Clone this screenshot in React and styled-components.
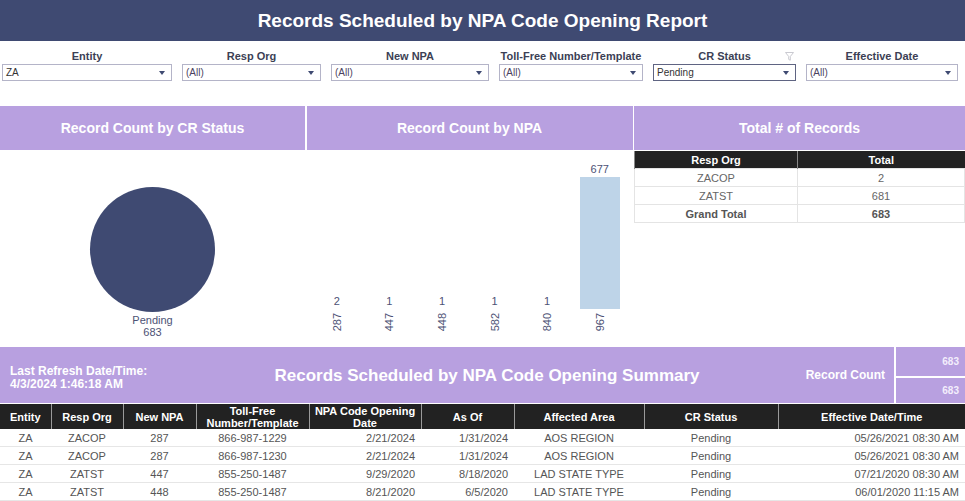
import styled, { createGlobalStyle } from "styled-components";

const GlobalStyle = createGlobalStyle`
    body {
        margin: 0;
        font-family: "Liberation Sans", Arial, sans-serif;
        background: #ffffff;
    }
`;

const filters = [
    { label: "Entity", value: "ZA" },
    { label: "Resp Org", value: "(All)" },
    { label: "New NPA", value: "(All)" },
    { label: "Toll-Free Number/Template", value: "(All)" },
    { label: "CR Status", value: "Pending", active: true },
    { label: "Effective Date", value: "(All)" },
];

const npaBars = [
    { npa: "287", count: 2 },
    { npa: "447", count: 1 },
    { npa: "448", count: 1 },
    { npa: "582", count: 1 },
    { npa: "840", count: 1 },
    { npa: "967", count: 677 },
];

const rows = [
    ["ZA", "ZACOP", "287", "866-987-1229", "2/21/2024", "1/31/2024", "AOS REGION", "Pending", "05/26/2021 08:30 AM"],
    ["ZA", "ZACOP", "287", "866-987-1230", "2/21/2024", "1/31/2024", "AOS REGION", "Pending", "05/26/2021 08:30 AM"],
    ["ZA", "ZATST", "447", "855-250-1487", "9/29/2020", "8/18/2020", "LAD STATE TYPE", "Pending", "07/21/2020 08:30 AM"],
    ["ZA", "ZATST", "448", "855-250-1487", "8/21/2020", "6/5/2020", "LAD STATE TYPE", "Pending", "06/01/2020 11:15 AM"],
];

const columns = [
    { title: "Entity", width: 51, align: "center" },
    { title: "Resp Org", width: 72, align: "center" },
    { title: "New NPA", width: 73, align: "center" },
    { title: "Toll-Free Number/Template", width: 113, align: "center" },
    { title: "NPA Code Opening Date", width: 112, align: "right" },
    { title: "As Of", width: 93, align: "right" },
    { title: "Affected Area", width: 130, align: "center" },
    { title: "CR Status", width: 134, align: "center" },
    { title: "Effective Date/Time", width: 187, align: "right" },
];

const Page = styled.div`
    width: 965px;
    height: 501px;
    overflow: hidden;
`;

const TitleBar = styled.header`
    height: 41px;
    background: #3f4a72;
    color: #ffffff;
    display: flex;
    align-items: center;
    justify-content: center;
    font-size: 19px;
    font-weight: bold;
`;

const FilterRow = styled.div`
    display: grid;
    grid-template-columns: 170px 139px 158px 144px 143px 152px;
    column-gap: 10px;
    padding: 8px 0 0 2px;
    height: 57px;
`;

const Filter = styled.div`
    display: flex;
    flex-direction: column;
    position: relative;
`;

const FilterLabel = styled.div`
    text-align: center;
    font-size: 11px;
    font-weight: bold;
    color: #3c3f55;
    height: 15px;
    line-height: 15px;
`;

const FunnelIcon = styled.svg`
    position: absolute;
    right: 2px;
    top: 3px;
`;

const Select = styled.div`
    height: 17px;
    box-sizing: border-box;
    border: 1px solid ${(p) => (p.$active ? "#5f6482" : "#b4b4c8")};
    display: flex;
    align-items: center;
    justify-content: space-between;
    padding: 0 6px 0 3px;
    font-size: 10px;
    color: ${(p) => (p.$value === "(All)" ? "#4b4260" : "#333333")};
`;

const Caret = styled.span`
    width: 0;
    height: 0;
    border-left: 3px solid transparent;
    border-right: 3px solid transparent;
    border-top: 4px solid #3f4a72;
`;

const Panels = styled.div`
    display: grid;
    grid-template-columns: 305px 326px 331px;
    column-gap: 1.5px;
    height: 241px;
`;

const Panel = styled.section`
    display: flex;
    flex-direction: column;
`;

const PanelHeader = styled.div`
    height: 44px;
    background: #b8a0e0;
    color: #ffffff;
    display: flex;
    align-items: center;
    justify-content: center;
    font-size: 14px;
    font-weight: bold;
`;

const PieBody = styled.div`
    display: flex;
    flex-direction: column;
    align-items: center;
    padding-top: 37px;
`;

const Pie = styled.div`
    width: 125px;
    height: 125px;
    border-radius: 50%;
    background: #3f4a72;
`;

const PieLabel = styled.div`
    margin-top: 2px;
    font-size: 11px;
    line-height: 12px;
    color: #4d5275;
    text-align: center;
`;

const BarChart = styled.div`
    display: flex;
    padding: 0 0 0 4px;
    height: 197px;
    align-items: stretch;
`;

const BarColumn = styled.div`
    width: 52.6px;
    display: flex;
    flex-direction: column;
    align-items: center;
`;

const BarArea = styled.div`
    height: 159px;
    display: flex;
    flex-direction: column;
    justify-content: flex-end;
    align-items: center;
`;

const BarValue = styled.div`
    font-size: 11px;
    color: #4d5275;
    margin-bottom: 2px;
`;

const Bar = styled.div`
    width: 40px;
    background: #bed4e8;
`;

const AxisLabel = styled.div`
    margin-top: 4px;
    writing-mode: vertical-rl;
    transform: rotate(180deg);
    font-size: 11px;
    color: #4d5275;
`;

const SummaryTable = styled.table`
    border-collapse: collapse;
    width: 331px;
    margin-top: 1px;
    font-size: 11px;

    th {
        background: #222222;
        color: #ffffff;
        font-weight: bold;
        height: 17px;
        padding: 0;
        border-left: 1px solid #888888;
    }

    td {
        height: 17px;
        padding: 0;
        text-align: center;
        color: #666666;
        border: 1px solid #e4e4e4;
    }

    tr.total td {
        font-weight: bold;
        color: #555555;
    }
`;

const SummaryBand = styled.div`
    display: grid;
    grid-template-columns: 260px 454px 180px 71px;
    height: 56px;
    background: #b8a0e0;
    color: #ffffff;
    border-bottom: 1px solid #ffffff;
`;

const RefreshInfo = styled.div`
    font-size: 12px;
    font-weight: bold;
    line-height: 13px;
    padding: 18px 0 0 10px;
`;

const SummaryTitle = styled.div`
    display: flex;
    align-items: center;
    justify-content: center;
    font-size: 17px;
    font-weight: bold;
    padding-top: 1px;
`;

const CountLabel = styled.div`
    display: flex;
    align-items: center;
    justify-content: flex-end;
    padding-right: 9px;
    font-size: 12px;
    font-weight: bold;
`;

const CountCells = styled.div`
    display: grid;
    grid-template-rows: 29px 1fr;
    row-gap: 2px;
    border-left: 2px solid #ffffff;
    background: #ffffff;
`;

const CountCell = styled.div`
    display: flex;
    align-items: center;
    justify-content: flex-end;
    padding-right: 6px;
    font-size: 10px;
    font-weight: bold;
    color: #f3eefc;
    background: #b8a0e0;
`;

const DataTable = styled.table`
    border-collapse: collapse;
    table-layout: fixed;
    width: 965px;
    font-size: 11px;

    th {
        background: #222222;
        color: #ffffff;
        font-weight: bold;
        height: 25px;
        padding: 0 2px;
        line-height: 12px;
        text-align: center;
        border-left: 1px solid #9a9a9a;
    }

    th:first-child {
        border-left: none;
    }

    td {
        height: 17px;
        padding: 0 6px;
        color: #555555;
        border-bottom: 1px solid #e6e6e6;
        white-space: nowrap;
    }
`;

const Cell = styled.td`
    text-align: ${(p) => p.$align};
`;

const App = () => {
    const max = 677;
    return (
        <>
            <GlobalStyle />
            <Page>
                <TitleBar>Records Scheduled by NPA Code Opening Report</TitleBar>

                <FilterRow>
                    {filters.map((f) => (
                        <Filter key={f.label}>
                            <FilterLabel>{f.label}</FilterLabel>
                            {f.active && (
                                <FunnelIcon width="9" height="9" viewBox="0 0 9 9">
                                    <path d="M0.5 0.5 H8.5 L5.3 4.5 V8.2 L3.7 7.4 V4.5 Z" fill="none" stroke="#c4c4cc" strokeWidth="0.9" />
                                </FunnelIcon>
                            )}
                            <Select $active={f.active} $value={f.value}>
                                <span>{f.value}</span>
                                <Caret />
                            </Select>
                        </Filter>
                    ))}
                </FilterRow>

                <Panels>
                    <Panel>
                        <PanelHeader>Record Count by CR Status</PanelHeader>
                        <PieBody>
                            <Pie />
                            <PieLabel>
                                Pending
                                <br />
                                683
                            </PieLabel>
                        </PieBody>
                    </Panel>

                    <Panel>
                        <PanelHeader>Record Count by NPA</PanelHeader>
                        <BarChart>
                            {npaBars.map((b) => (
                                <BarColumn key={b.npa}>
                                    <BarArea>
                                        <BarValue>{b.count}</BarValue>
                                        <Bar style={{ height: `${Math.round((b.count / max) * 132)}px` }} />
                                    </BarArea>
                                    <AxisLabel>{b.npa}</AxisLabel>
                                </BarColumn>
                            ))}
                        </BarChart>
                    </Panel>

                    <Panel>
                        <PanelHeader>Total # of Records</PanelHeader>
                        <SummaryTable>
                            <thead>
                                <tr>
                                    <th style={{ width: 162 }}>Resp Org</th>
                                    <th>Total</th>
                                </tr>
                            </thead>
                            <tbody>
                                <tr>
                                    <td>ZACOP</td>
                                    <td>2</td>
                                </tr>
                                <tr>
                                    <td>ZATST</td>
                                    <td>681</td>
                                </tr>
                                <tr className="total">
                                    <td>Grand Total</td>
                                    <td>683</td>
                                </tr>
                            </tbody>
                        </SummaryTable>
                    </Panel>
                </Panels>

                <SummaryBand>
                    <RefreshInfo>
                        Last Refresh Date/Time:
                        <br />
                        4/3/2024 1:46:18 AM
                    </RefreshInfo>
                    <SummaryTitle>Records Scheduled by NPA Code Opening Summary</SummaryTitle>
                    <CountLabel>Record Count</CountLabel>
                    <CountCells>
                        <CountCell>683</CountCell>
                        <CountCell>683</CountCell>
                    </CountCells>
                </SummaryBand>

                <DataTable>
                    <colgroup>
                        {columns.map((c) => (
                            <col key={c.title} style={{ width: c.width }} />
                        ))}
                    </colgroup>
                    <thead>
                        <tr>
                            {columns.map((c) => (
                                <th key={c.title}>{c.title}</th>
                            ))}
                        </tr>
                    </thead>
                    <tbody>
                        {rows.map((r, i) => (
                            <tr key={i}>
                                {r.map((v, j) => (
                                    <Cell key={j} $align={columns[j].align}>
                                        {v}
                                    </Cell>
                                ))}
                            </tr>
                        ))}
                    </tbody>
                </DataTable>
            </Page>
        </>
    );
};

export default App;
